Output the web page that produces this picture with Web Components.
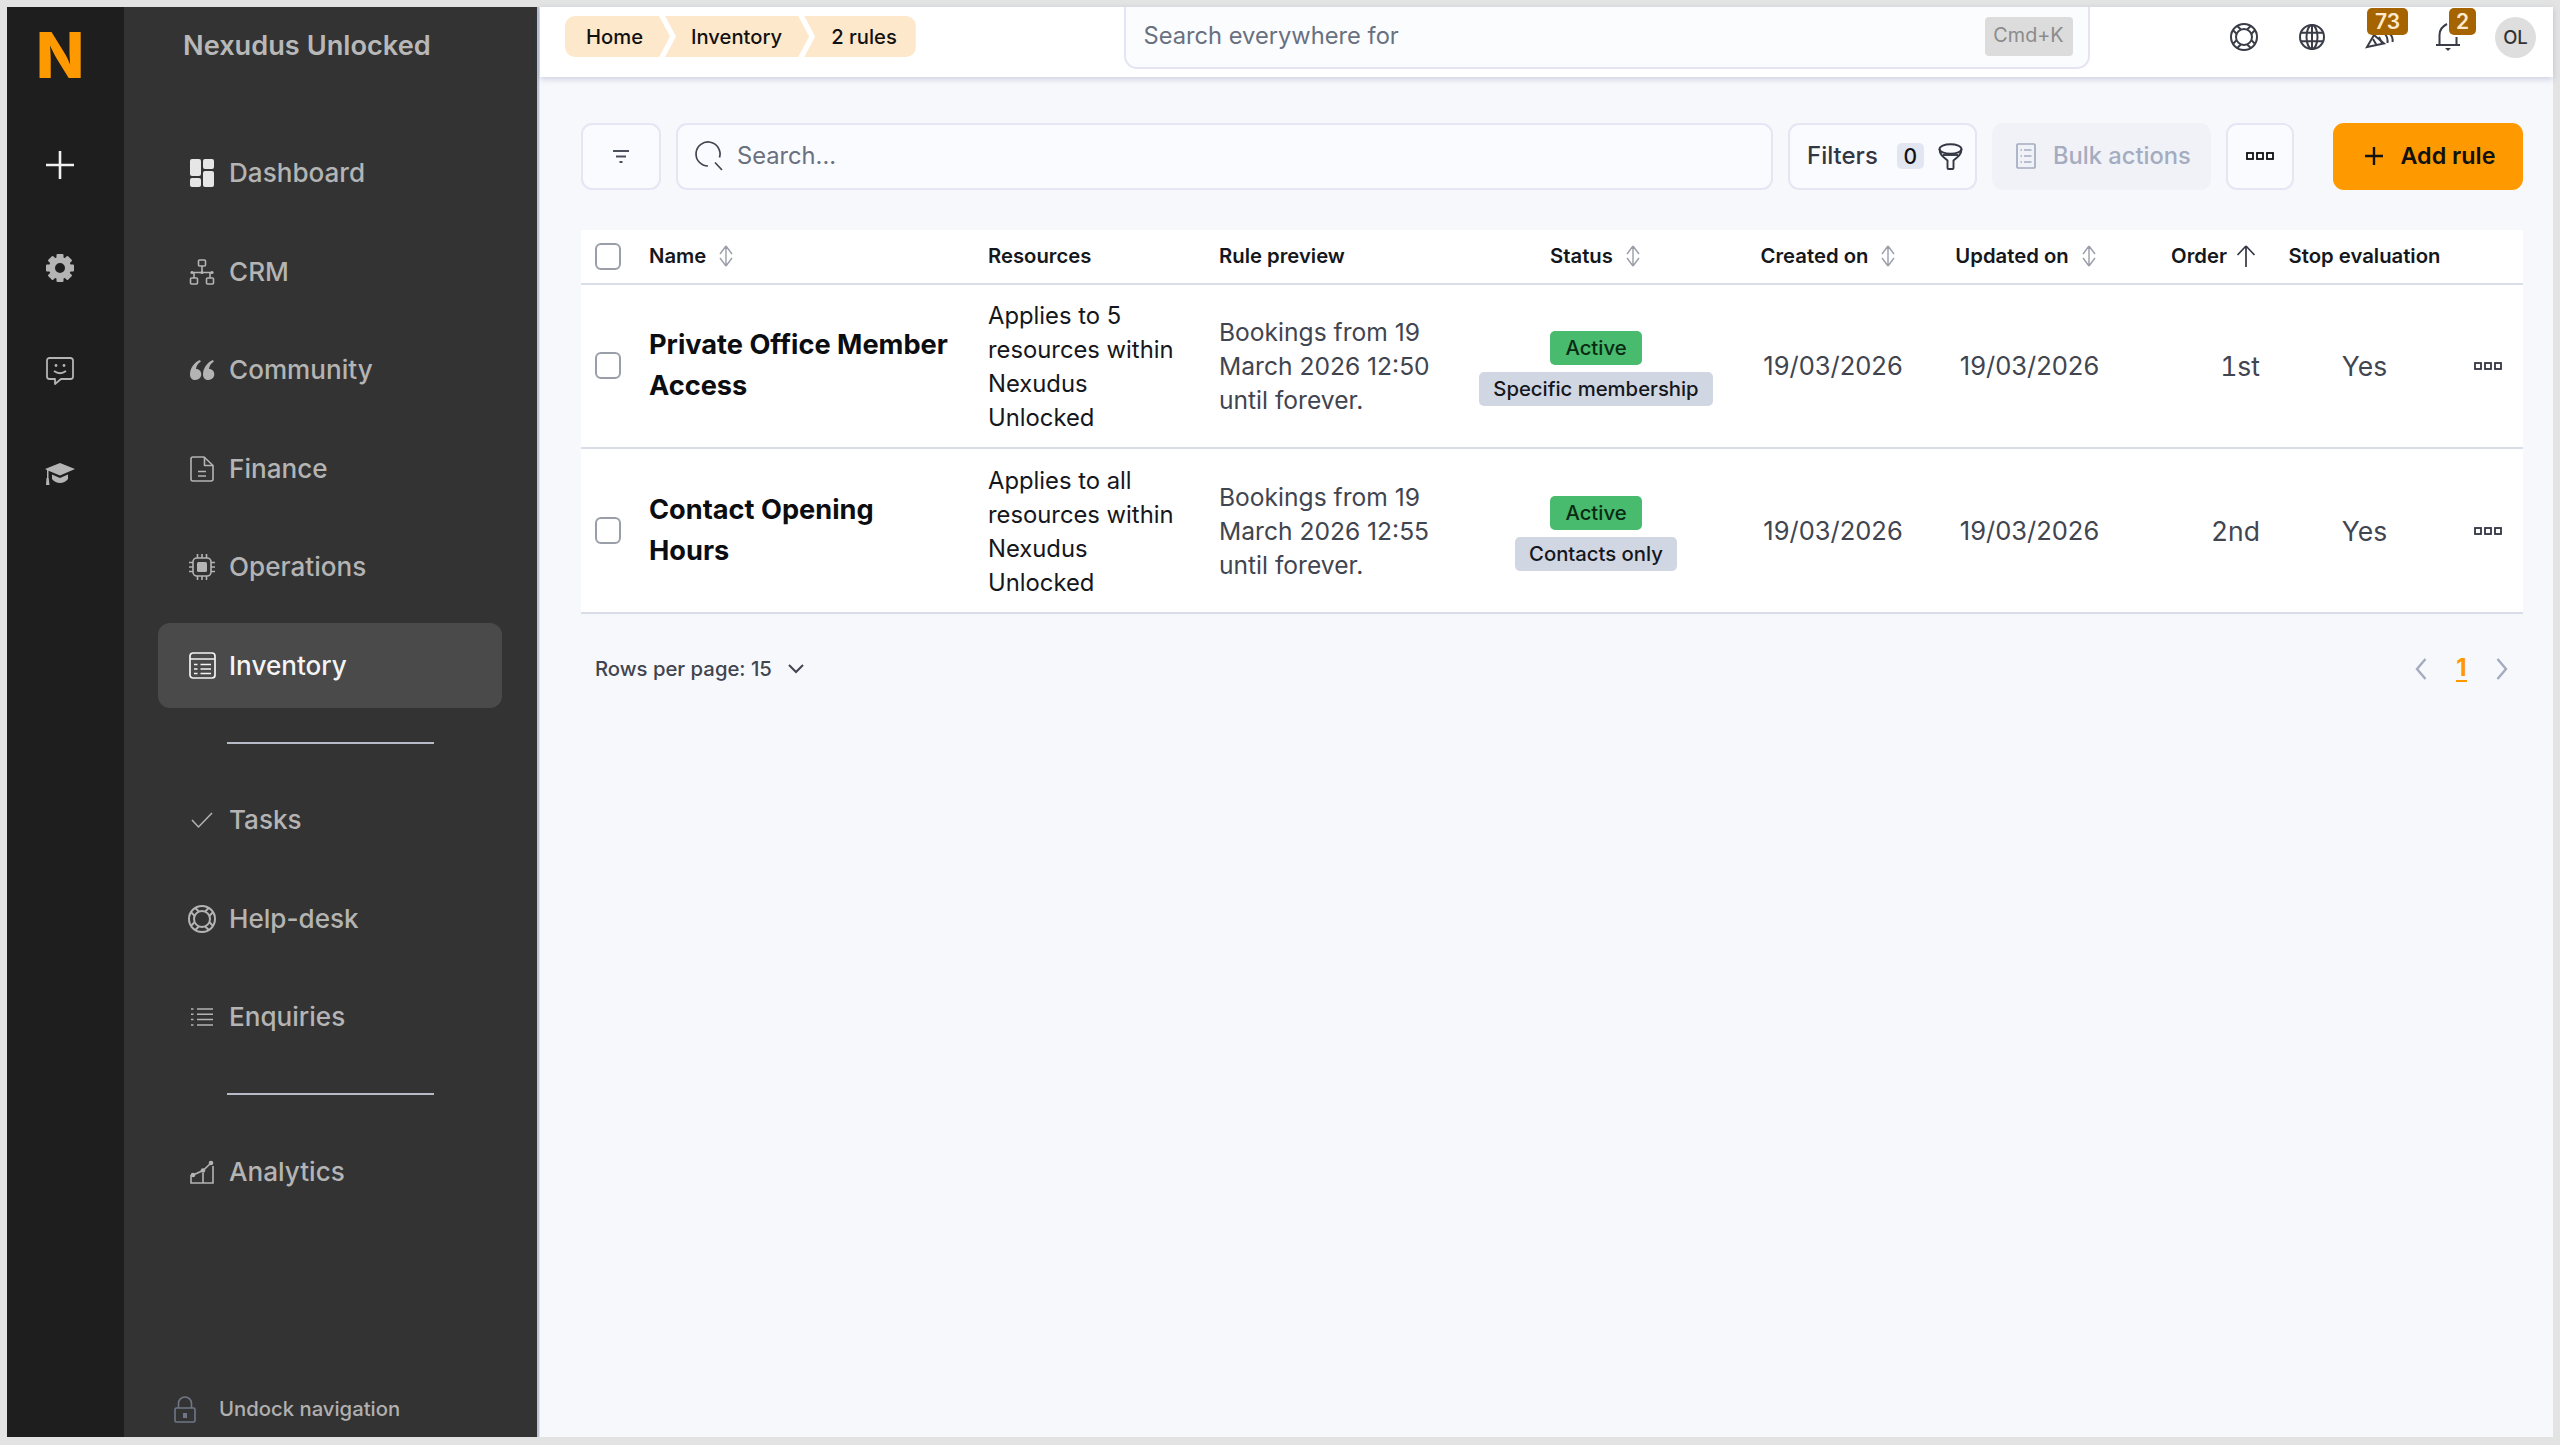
<!DOCTYPE html>
<html lang="en">
<head>
<meta charset="utf-8">
<title>Inventory rules</title>
<style>
  html, body { margin: 0; padding: 0; background: #e3e3e3; }
  body { font-family: Inter, "Liberation Sans", sans-serif; }
</style>
</head>
<body>
<nx-app>
  <nx-rail slot="rail"></nx-rail>
  <nx-sidebar slot="sidebar" title="Nexudus Unlocked">
    <nx-nav-item icon="dashboard" label="Dashboard"></nx-nav-item>
    <nx-nav-item icon="crm" label="CRM"></nx-nav-item>
    <nx-nav-item icon="community" label="Community"></nx-nav-item>
    <nx-nav-item icon="finance" label="Finance"></nx-nav-item>
    <nx-nav-item icon="chip" label="Operations"></nx-nav-item>
    <nx-nav-item icon="inventory" label="Inventory" active></nx-nav-item>
    <nx-nav-rule></nx-nav-rule>
    <nx-nav-item icon="check" label="Tasks"></nx-nav-item>
    <nx-nav-item icon="lifebuoy" label="Help-desk"></nx-nav-item>
    <nx-nav-item icon="enquiries" label="Enquiries"></nx-nav-item>
    <nx-nav-rule></nx-nav-rule>
    <nx-nav-item icon="analytics" label="Analytics"></nx-nav-item>
  </nx-sidebar>
  <nx-topbar slot="topbar"></nx-topbar>
  <nx-toolbar slot="main"></nx-toolbar>
  <nx-rule-table slot="main">
    <nx-rule-row name="Private Office Member Access" resources="Applies to 5 resources within Nexudus Unlocked"
      preview="Bookings from 19 March 2026 12:50 until forever." tag="Specific membership"
      created="19/03/2026" updated="19/03/2026" order="1st" stop="Yes"></nx-rule-row>
    <nx-rule-row name="Contact Opening Hours" resources="Applies to all resources within Nexudus Unlocked"
      preview="Bookings from 19 March 2026 12:55 until forever." tag="Contacts only"
      created="19/03/2026" updated="19/03/2026" order="2nd" stop="Yes"></nx-rule-row>
  </nx-rule-table>
  <nx-pager slot="main"></nx-pager>
</nx-app>

<script>
// all icons live here, name -> [width, height, svg body]
const ICONS = {
  dashboard: [24, 28, `<g fill="#e6e6e6"><rect width="11" height="17" rx="2"/><rect y="19" width="11" height="9" rx="2"/><rect x="13" width="11" height="10" rx="2"/><rect x="13" y="12" width="11" height="16" rx="2"/></g>`],
  crm: [26, 26, `<g fill="none" stroke="currentColor" stroke-width="1.6"><rect x="9.5" y="1" width="7" height="6" rx="1"/><path d="M13 7v6.5M2 13.5h22M5 14v5M21 14v5"/><rect x="1.5" y="19" width="7" height="6" rx="1"/><rect x="17.5" y="19" width="7" height="6" rx="1"/></g><g fill="currentColor"><circle cx="3" cy="13.5" r="1.6"/><circle cx="13" cy="13.5" r="1.6"/><circle cx="23" cy="13.5" r="1.6"/></g>`],
  community: [24, 20, `<g fill="currentColor"><path d="M5.3 20C2.2 20 0 17.6 0 14.4 0 8.2 4.2 2.3 9.9 0l1 1.6C8 3.7 6.3 6 6 8.9c3-.2 5.3 2.2 5.3 5.4 0 3.2-2.6 5.7-6 5.7z"/><path d="M18.3 20c-3.100 0-5.300-2.400-5.300-5.600 0-6.200 4.200-12.100 9.900-14.400l1 1.600C21 3.700 19.300 6 19 8.900c3-.2 5.300 2.200 5.300 5.400 0 3.200-2.600 5.700-6 5.700z"/></g>`],
  finance: [24, 26, `<g fill="none" stroke="currentColor" stroke-width="1.6" stroke-linejoin="round"><path d="M3 1h11l9 8.5V23a2 2 0 0 1-2 2H3a2 2 0 0 1-2-2V3a2 2 0 0 1 2-2z"/><path d="M14.5 1v8.5H23M8 15.5h8M8 20h8"/></g>`],
  chip: [28, 28, `<g fill="none" stroke="currentColor" stroke-width="1.6"><rect x="5" y="5" width="18" height="18" rx="4"/><path d="M9.5 1v4M14 1v4M18.5 1v4M9.5 23v4M14 23v4M18.5 23v4M1 9.5h4M1 14h4M1 18.5h4M23 9.5h4M23 14h4M23 18.5h4"/></g><rect x="9" y="9" width="10" height="10" rx="1.5" fill="currentColor"/>`],
  inventory: [27, 27, `<g fill="none" stroke="currentColor" stroke-width="1.7"><rect x="1" y="1" width="25" height="25" rx="3"/><path d="M1 7h25M5 12.5h3.5M11.5 12.5H22M5 17h3.5M11.5 17H22M5 21.5h3.5M11.5 21.5H22"/></g>`],
  check: [22, 16, `<path d="M1 8l6.5 7L21 1" fill="none" stroke="currentColor" stroke-width="1.5"/>`],
  lifebuoy: [28, 28, `<g fill="none" stroke="currentColor" stroke-width="2"><circle cx="14" cy="14" r="13"/><circle cx="14" cy="14" r="8"/><path transform="rotate(45 14 14)" d="M11 1.5V6.5M17 1.5V6.5"/><path transform="rotate(135 14 14)" d="M11 1.5V6.5M17 1.5V6.5"/><path transform="rotate(225 14 14)" d="M11 1.5V6.5M17 1.5V6.5"/><path transform="rotate(315 14 14)" d="M11 1.5V6.5M17 1.5V6.5"/></g>`],
  enquiries: [22, 18, `<path d="M0 1h2.5M6 1h16M0 6.3h2.5M6 6.3h16M0 11.6h2.5M6 11.6h16M0 17h2.5M6 17h16" fill="none" stroke="currentColor" stroke-width="1.5"/>`],
  analytics: [24, 24, `<g fill="none" stroke="currentColor" stroke-width="1.6"><path d="M1 15v8h22V6M13 13v10M3 15l10-4.5L21 3"/></g><g fill="currentColor"><circle cx="3" cy="15" r="2.3"/><circle cx="13" cy="10.5" r="2.3"/><circle cx="21" cy="3" r="2.3"/></g>`],
  lock: [22, 27, `<g fill="none" stroke="currentColor" stroke-width="1.6"><rect x="1" y="12" width="20" height="14" rx="1.5"/><path d="M4.500 12V7.500a6.500 6.500 0 0 1 13 0V12"/></g><rect x="9" y="17" width="4" height="5" fill="currentColor"/>`],
  plus: [28, 28, `<path d="M14 0v28M0 14h28" fill="none" stroke="currentColor" stroke-width="2.6"/>`],
  addplus: [18, 18, `<path d="M9 0v18M0 9h18" fill="none" stroke="currentColor" stroke-width="2.4"/>`],
  gear: [28, 28, `<g fill="currentColor"><rect x="10.5" width="7" height="7" rx="1"/><rect x="10.5" width="7" height="7" rx="1" transform="rotate(45 14 14)"/><rect x="10.5" width="7" height="7" rx="1" transform="rotate(90 14 14)"/><rect x="10.5" width="7" height="7" rx="1" transform="rotate(135 14 14)"/><rect x="10.5" width="7" height="7" rx="1" transform="rotate(180 14 14)"/><rect x="10.5" width="7" height="7" rx="1" transform="rotate(225 14 14)"/><rect x="10.5" width="7" height="7" rx="1" transform="rotate(270 14 14)"/><rect x="10.5" width="7" height="7" rx="1" transform="rotate(315 14 14)"/></g><circle cx="14" cy="14" r="8" fill="none" stroke="currentColor" stroke-width="6"/>`],
  chat: [28, 28, `<path d="M3.5 1h21A2.500 2.500 0 0 1 27 3.500v16a2.500 2.500 0 0 1-2.500 2.500H15l-6 5v-5H3.500A2.500 2.500 0 0 1 1 19.500v-16A2.500 2.500 0 0 1 3.500 1z" fill="none" stroke="currentColor" stroke-width="1.8" stroke-linejoin="round"/><circle cx="10" cy="8.5" r="1.4" fill="currentColor"/><circle cx="18" cy="8.5" r="1.4" fill="currentColor"/><path d="M8 14q6 4.500 12 0" fill="none" stroke="currentColor" stroke-width="1.8"/>`],
  cap: [30, 22, `<g fill="currentColor"><path d="M15 0l15 6-15 6.500L3.500 7.800V15H2V7L0 6z"/><path d="M7 11.500l8 3.500 8-3.500V16c-2 2.600-5 4-8 4s-6-1.400-8-4z"/><path d="M1.500 15h2.200l.8 7H1z"/></g>`],
  lines: [16, 13, `<path d="M0 1h16M3 6.5h10M6.5 12h3" fill="none" stroke="currentColor" stroke-width="1.8"/>`],
  search: [28, 30, `<path d="M13 25A12 12 0 1 1 24.5 16.5M20 21.5l7 7.5" fill="none" stroke="currentColor" stroke-width="1.7"/>`],
  funnel: [25, 27, `<g fill="none" stroke="currentColor" stroke-width="1.9"><ellipse cx="12.5" cy="6" rx="11" ry="4.8"/><path d="M1.500 6c0 5 3 7.500 8 11.500V25a1 1 0 0 0 1 1h4a1 1 0 0 0 1-1v-7.500c5-4 8-6.500 8-11.500"/><path d="M4.800 12h15.400"/></g>`],
  bulk: [20, 26, `<g fill="none" stroke="currentColor" stroke-width="1.7"><rect x="1" y="1" width="18" height="24" rx="1"/><path d="M4.500 7h1.500M8 7h7.500M4.500 13h1.500M8 13h7.500M4.500 19h1.500M8 19h7.500"/></g>`],
  dots: [28, 8, `<g fill="none" stroke="currentColor" stroke-width="1.8"><rect x="1" y="1" width="6" height="6"/><rect x="11" y="1" width="6" height="6"/><rect x="21" y="1" width="6" height="6"/></g>`],
  sort: [18, 22, `<path d="M9 1v20M9 1L3 9M9 1l6 8M9 21l-6-8M9 21l6-8" fill="none" stroke="currentColor" stroke-width="1.4"/>`],
  up: [20, 22, `<path d="M10 1v21M10 1L1.500 10M10 1l8.500 9" fill="none" stroke="currentColor" stroke-width="1.7"/>`],
  globe: [26, 26, `<g fill="none" stroke="currentColor" stroke-width="2"><circle cx="13" cy="13" r="12"/><ellipse cx="13" cy="13" rx="5.5" ry="12"/><path d="M13 1v24M2 8.8h22M2 17.2h22"/></g>`],
  bell: [24, 28, `<g fill="none" stroke="currentColor" stroke-width="2"><path d="M3.500 21v-9C3.500 7 7 3 11 1M20.500 14v7M0 22h24"/></g><path d="M9 25h6l-3 3z" fill="currentColor"/>`],
  horn: [28, 18, `<g fill="none" stroke="currentColor" stroke-width="2"><path d="M1 16L8 4l10 8.500z"/><path d="M7 8l3.500 6M13 6l3 6M19 3c2 2.500 3 5 2.500 9M24 3c2 2 3 5 2.500 8"/></g>`],
  chevdown: [16, 10, `<path d="M1 1l7 7 7-7" fill="none" stroke="currentColor" stroke-width="2"/>`],
  chevleft: [12, 22, `<path d="M10.5 1L2 11l8.500 10" fill="none" stroke="currentColor" stroke-width="2.4"/>`],
  chevright: [12, 22, `<path d="M1.5 1L10 11 1.500 21" fill="none" stroke="currentColor" stroke-width="2.4"/>`],
};

class NxIcon extends HTMLElement {
  connectedCallback() {
    const [w, h, body] = ICONS[this.getAttribute('name')];
    this.attachShadow({ mode: 'open' }).innerHTML = `
      <style>:host { display: inline-flex; flex: none; line-height: 0; }</style>
      <svg width="${w}" height="${h}" viewBox="0 0 ${w} ${h}" style="overflow:visible">${body}</svg>`;
  }
}
customElements.define('nx-icon', NxIcon);

class NxApp extends HTMLElement {
  constructor() {
    super();
    this.attachShadow({ mode: 'open' }).innerHTML = `
      <style>
        :host { display: flex; box-sizing: border-box; width: 2560px; height: 1445px; padding: 7px 7px 8px; }
        .work { flex: 1; min-width: 0; display: flex; flex-direction: column; background: #f7f8fc; margin-left: 1px; }
        .content { padding: 46px 30px 0 41px; display: flex; flex-direction: column; }
      </style>
      <slot name="rail"></slot>
      <slot name="sidebar"></slot>
      <div class="work">
        <slot name="topbar"></slot>
        <div class="content"><slot name="main"></slot></div>
      </div>`;
  }
}
customElements.define('nx-app', NxApp);

class NxRail extends HTMLElement {
  constructor() {
    super();
    this.attachShadow({ mode: 'open' }).innerHTML = `
      <style>
        :host { display: flex; flex-direction: column; align-items: center; flex: none; box-sizing: border-box; width: 117px; padding-right: 11px; background: #1e1e1e; color: #b4b4b4; }
        .logo { height: 96px; margin-bottom: 10.5px; display: flex; align-items: center; font: 800 63px/1 Inter, sans-serif; color: #ff9900; }
        .cell { height: 103px; display: flex; align-items: center; justify-content: center; }
        .plus { color: #f2f2f2; }
      </style>
      <div class="logo">N</div>
      <div class="cell plus"><nx-icon name="plus"></nx-icon></div>
      <div class="cell"><nx-icon name="gear"></nx-icon></div>
      <div class="cell"><nx-icon name="chat"></nx-icon></div>
      <div class="cell"><nx-icon name="cap"></nx-icon></div>`;
  }
}
customElements.define('nx-rail', NxRail);

class NxSidebar extends HTMLElement {
  connectedCallback() {
    this.attachShadow({ mode: 'open' }).innerHTML = `
      <style>
        :host { display: flex; flex-direction: column; flex: none; box-sizing: border-box; width: 415px; background: #333333; border-right: 2px solid #bcc3d6; }
        .title { height: 123.5px; padding: 20px 0 0 59px; box-sizing: border-box; font: 600 27.2px/38px Inter, sans-serif; color: #b8b8b8; }
        nav { display: flex; flex-direction: column; gap: 13.5px; padding: 0 35px 0 34px; }
        .undock { margin-top: auto; display: flex; align-items: center; gap: 23px; padding: 0 0 14px 50px; font: 500 20.3px/28px Inter, sans-serif; color: #b0b0b0; }
        .undock nx-icon { color: #6f7787; }
      </style>
      <div class="title">${this.getAttribute('title')}</div>
      <nav><slot></slot></nav>
      <div class="undock"><nx-icon name="lock"></nx-icon><span>Undock navigation</span></div>`;
  }
}
customElements.define('nx-sidebar', NxSidebar);

class NxNavItem extends HTMLElement {
  connectedCallback() {
    const active = this.hasAttribute('active');
    this.attachShadow({ mode: 'open' }).innerHTML = `
      <style>
        :host { display: flex; align-items: center; height: 85px; padding-left: 30px; border-radius: 12px;
          font: 500 26.1px/34px Inter, sans-serif; color: ${active ? '#f4f4f4' : '#b4b4b4'};
          background: ${active ? '#4a4a4a' : 'transparent'}; }
        .ico { width: 28px; display: flex; justify-content: center; margin-right: 13px; }
      </style>
      <span class="ico"><nx-icon name="${this.getAttribute('icon')}"></nx-icon></span>
      <span>${this.getAttribute('label')}</span>`;
  }
}
customElements.define('nx-nav-item', NxNavItem);

class NxNavRule extends HTMLElement {
  constructor() {
    super();
    this.attachShadow({ mode: 'open' }).innerHTML = `
      <style>:host { display: block; height: 2px; margin: 20px 68px 20.5px 69px; background: #b7bbc8; }</style>`;
  }
}
customElements.define('nx-nav-rule', NxNavRule);

class NxTopbar extends HTMLElement {
  constructor() {
    super();
    this.attachShadow({ mode: 'open' }).innerHTML = `
      <style>
        :host { display: grid; grid-template-columns: 583.5px 966px 1fr; height: 69.5px; position: relative; background: #fff; box-shadow: 0 2px 6px rgba(90, 100, 150, .28); }
        .crumbs { display: flex; align-items: flex-start; padding: 9px 0 0 25px; font: 500 20.2px/41px Inter, sans-serif; color: #111; }
        .crumb { height: 41px; background: #fde8cc; display: flex; align-items: center; margin-right: -5px; padding: 0 27px 0 26px;
          clip-path: polygon(0 0, calc(100% - 11px) 0, 100% 50%, calc(100% - 11px) 100%, 0 100%, 11px 50%); }
        .crumb.first { padding-left: 21px; border-radius: 10px 0 0 10px; clip-path: polygon(0 0, calc(100% - 11px) 0, 100% 50%, calc(100% - 11px) 100%, 0 100%); }
        .crumb.last { padding: 0 19px 0 27px; margin: 0; border-radius: 0 10px 10px 0; clip-path: polygon(0 0, 100% 0, 100% 100%, 0 100%, 11px 50%); }
        .find { box-sizing: border-box; height: 62px; display: flex; align-items: center; justify-content: space-between; padding: 0 15px 2px 18px;
          background: #fbfcfe; border: 2px solid #e3e5f4; border-top: 0; border-radius: 0 0 13px 13px; font: 400 23.7px/1 Inter, sans-serif; color: #697080; }
        .key { height: 39px; width: 88px; display: flex; align-items: center; justify-content: center; background: #dcdcdc; border-radius: 4px; font-size: 19.8px; color: #8b8b8b; }
        .tools { display: flex; justify-content: flex-end; padding-right: 3.5px; color: #3a3d47; }
        .tool { position: relative; width: 68px; height: 60px; display: flex; align-items: center; justify-content: center; }
        .badge { position: absolute; top: 1px; height: 27px; box-sizing: border-box; display: flex; align-items: center; justify-content: center; background: #a66400; border-radius: 5px; color: #fdeacd; font: 600 21px/1 Inter, sans-serif; }
        .avatar { width: 41px; height: 41px; border-radius: 50%; background: #dedede; display: flex; align-items: center; justify-content: center; font: 500 18.5px/1 Inter, sans-serif; color: #333; }
      </style>
      <div class="crumbs">
        <div class="crumb first">Home</div>
        <div class="crumb">Inventory</div>
        <div class="crumb last">2 rules</div>
      </div>
      <div class="find"><span>Search everywhere for</span><span class="key">Cmd+K</span></div>
      <div class="tools">
        <div class="tool"><nx-icon name="lifebuoy"></nx-icon></div>
        <div class="tool"><nx-icon name="globe"></nx-icon></div>
        <div class="tool"><nx-icon name="horn" style="margin-top:6px"></nx-icon><span class="badge" style="left:21.5px;width:41px">73</span></div>
        <div class="tool"><nx-icon name="bell"></nx-icon><span class="badge" style="left:35.5px;width:27px">2</span></div>
        <div class="tool"><span class="avatar">OL</span></div>
      </div>`;
  }
}
customElements.define('nx-topbar', NxTopbar);

class NxToolbar extends HTMLElement {
  constructor() {
    super();
    this.attachShadow({ mode: 'open' }).innerHTML = `
      <style>
        :host { display: flex; height: 67px; gap: 15px; font: 500 24px/1 Inter, sans-serif; color: #333743; }
        .box { box-sizing: border-box; display: flex; align-items: center; background: #fafbfe; border: 2px solid #e4e6f3; border-radius: 11px; }
        .filter { width: 80px; justify-content: center; color: #4b4f5c; }
        .search { flex: 1; padding-left: 17px; gap: 14px; font-weight: 400; font-size: 23.7px; color: #697080; }
        .search nx-icon { color: #414550; }
        .filters { width: 189px; padding-left: 17px; }
        .count { margin-left: 19px; width: 27px; height: 26px; display: flex; align-items: center; justify-content: center; background: #e2e6f0; border-radius: 5px; font-size: 21px; color: #111; }
        .filters nx-icon { margin-left: 14px; color: #333743; }
        .bulk { width: 219px; padding-left: 21.5px; gap: 17.5px; font-size: 23.7px; background: #f1f2f7; border-color: #f1f2f7; color: #a4acc0; }
        .more { width: 68px; justify-content: center; color: #111; }
        .add { width: 190px; margin-left: 24px; box-sizing: border-box; padding-left: 31.5px; display: flex; align-items: center; gap: 18px; background: #ff9900; border-radius: 11px; font-weight: 600; font-size: 23.3px; color: #111; }
      </style>
      <div class="box filter"><nx-icon name="lines"></nx-icon></div>
      <div class="box search"><nx-icon name="search"></nx-icon><span>Search...</span></div>
      <div class="box filters"><span>Filters</span><span class="count">0</span><nx-icon name="funnel"></nx-icon></div>
      <div class="box bulk"><nx-icon name="bulk"></nx-icon><span>Bulk actions</span></div>
      <div class="box more"><nx-icon name="dots"></nx-icon></div>
      <div class="add"><nx-icon name="addplus"></nx-icon><span>Add rule</span></div>`;
  }
}
customElements.define('nx-toolbar', NxToolbar);

// same column widths for the header and both rows
const RULE_COLS = 'grid-template-columns: 68px 339px 231px 246px 262px 212px 181px 140px 209px 54px;';

class NxRuleTable extends HTMLElement {
  constructor() {
    super();
    this.attachShadow({ mode: 'open' }).innerHTML = `
      <style>
        :host { display: block; margin-top: 40px; background: #fff; }
        .head { display: grid; ${RULE_COLS} height: 55px; box-sizing: border-box; border-bottom: 2px solid #d9dde8; align-items: center; font: 600 20.3px/1 Inter, sans-serif; color: #15171c; }
        .c { display: flex; align-items: center; gap: 11px; }
        .mid { justify-content: center; }
        .end { justify-content: flex-end; }
        .box { width: 26px; height: 27px; box-sizing: border-box; border: 2px solid #9a9ea8; border-radius: 6px; background: #fff; margin-left: 14px; }
        nx-icon { color: #9a9ea8; }
        .up { color: #333743; }
      </style>
      <div class="head">
        <div class="c"><span class="box"></span></div>
        <div class="c"><span>Name</span><nx-icon name="sort"></nx-icon></div>
        <div class="c"><span>Resources</span></div>
        <div class="c"><span>Rule preview</span></div>
        <div class="c mid"><span>Status</span><nx-icon name="sort"></nx-icon></div>
        <div class="c mid" style="padding-right:8px"><span>Created on</span><nx-icon name="sort"></nx-icon></div>
        <div class="c mid" style="padding-right:6px"><span>Updated on</span><nx-icon name="sort"></nx-icon></div>
        <div class="c end" style="padding-right:4px;gap:9px"><span>Order</span><nx-icon class="up" name="up"></nx-icon></div>
        <div class="c mid"><span>Stop evaluation</span></div>
        <div></div>
      </div>
      <slot></slot>`;
  }
}
customElements.define('nx-rule-table', NxRuleTable);

class NxRuleRow extends HTMLElement {
  connectedCallback() {
    const a = n => this.getAttribute(n);
    this.attachShadow({ mode: 'open' }).innerHTML = `
      <style>
        :host { display: grid; ${RULE_COLS} height: 164.8px; box-sizing: border-box; border-bottom: 2px solid #d9dde8; align-items: center; font: 400 25.5px/34px Inter, sans-serif; color: #41454f; }
        .box { display: block; width: 26px; height: 27px; box-sizing: border-box; border: 2px solid #9a9ea8; border-radius: 6px; margin-left: 14px; }
        .name { max-width: 305px; font: 700 27.2px/40.8px Inter, sans-serif; color: #0c0d10; }
        .res { max-width: 195px; padding-top: 3px; font-size: 23.8px; color: #15171c; }
        .prev { max-width: 225px; font-size: 24.6px; }
        .status { display: flex; flex-direction: column; align-items: center; gap: 7px; padding-top: 5px; }
        .tag { height: 34px; display: flex; align-items: center; padding: 0 14.5px; border-radius: 5px; font: 500 20.3px/1 Inter, sans-serif; color: #15171c; background: #d1d6e3; }
        .tag.on { background: #48bb6e; color: #0a2a12; padding: 0 15.5px; }
        .mid { text-align: center; }
        .end { text-align: right; font-size: 26.5px; font-feature-settings: "tnum"; }
        .yes { text-align: center; font-size: 26.5px; }
        .act { display: flex; justify-content: center; padding-right: 16px; color: #333743; }
      </style>
      <div><span class="box"></span></div>
      <div class="name">${a('name')}</div>
      <div class="res">${a('resources')}</div>
      <div class="prev">${a('preview')}</div>
      <div class="status"><span class="tag on">Active</span><span class="tag">${a('tag')}</span></div>
      <div class="mid">${a('created')}</div>
      <div class="mid">${a('updated')}</div>
      <div class="end">${a('order')}</div>
      <div class="yes">${a('stop')}</div>
      <div class="act"><nx-icon name="dots"></nx-icon></div>`;
  }
}
customElements.define('nx-rule-row', NxRuleRow);

class NxPager extends HTMLElement {
  constructor() {
    super();
    this.attachShadow({ mode: 'open' }).innerHTML = `
      <style>
        :host { display: flex; align-items: center; justify-content: space-between; height: 110px; padding: 0 15px 0 14px; font: 500 20.3px/1 Inter, sans-serif; color: #41454f; }
        .rows { display: flex; align-items: center; gap: 16px; }
        .pages { display: flex; align-items: center; gap: 29px; color: #a3abc0; }
        .num { width: 11px; display: flex; justify-content: center; color: #ff9900; font: 700 24px/1 Inter, sans-serif; border-bottom: 2px solid #ff9900; }
      </style>
      <div class="rows"><span>Rows per page: 15</span><nx-icon name="chevdown"></nx-icon></div>
      <div class="pages"><nx-icon name="chevleft"></nx-icon><span class="num">1</span><nx-icon name="chevright"></nx-icon></div>`;
  }
}
customElements.define('nx-pager', NxPager);
</script>
</body>
</html>
